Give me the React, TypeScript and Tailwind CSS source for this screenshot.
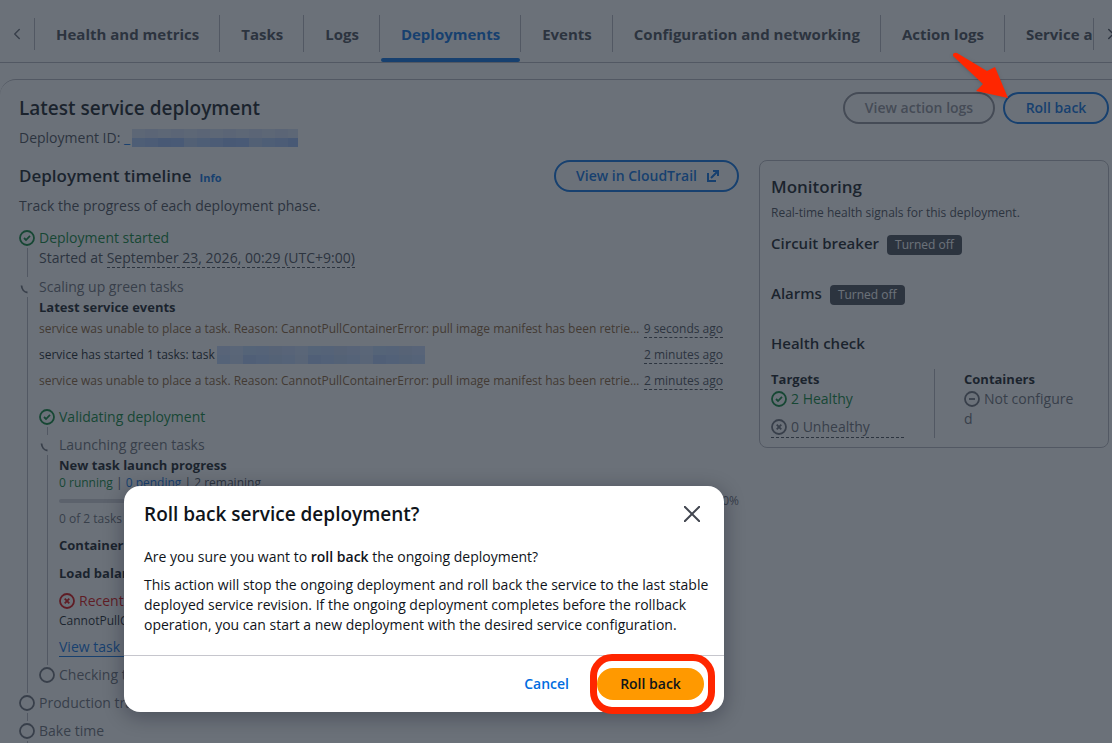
import { ReactNode } from "react";
import { ChevronLeft, ChevronRight } from "lucide-react";

const tabs = [
  "Health and metrics",
  "Tasks",
  "Logs",
  "Deployments",
  "Events",
  "Configuration and networking",
  "Action logs",
  "Service auto scaling",
];

const pullError =
  "service was unable to place a task. Reason: CannotPullContainerError: pull image manifest has been retrie…";

const events = [
  { text: pullError, time: "9 seconds ago", warning: true },
  { text: "service has started 1 tasks: task", time: "2 minutes ago", warning: false },
  { text: pullError, time: "2 minutes ago", warning: true },
];

type IconName = "success" | "error" | "stopped" | "pending" | "loading";

const iconPaths: Record<IconName, string> = {
  success: "m5 8 2 2 4-4.2",
  error: "m5.7 5.7 4.6 4.6M10.3 5.7l-4.6 4.6",
  stopped: "M5 8h6",
  pending: "",
  loading: "M2.5 6.5C2.8 10 5 13.200 8.500 13.500",
};

function StatusIcon({ name }: { name: IconName }) {
  return (
    <svg viewBox="0 0 16 16" className="size-4 shrink-0" fill="none" stroke="currentColor" strokeWidth="1.8">
      {name !== "loading" && <circle cx="8" cy="8" r="7" />}
      <path d={iconPaths[name]} />
    </svg>
  );
}

interface StepProps {
  icon: IconName;
  color: string;
  title: string;
  last?: boolean;
  children?: ReactNode;
}

function Step({ icon, color, title, last, children }: StepProps) {
  return (
    <li className="flex gap-1">
      <div className="flex w-4 shrink-0 flex-col items-center">
        <span className={`flex h-5 items-center ${color}`}>
          <StatusIcon name={icon} />
        </span>
        {!last && <span className="w-px flex-1 bg-[#b4b4bb]" />}
      </div>
      <div className={`min-w-0 flex-1 ${last ? "" : "pb-2"}`}>
        <p className={color}>{title}</p>
        {children}
      </div>
    </li>
  );
}

// blocked-out ids, drawn as two rows of tiles
function Redacted({ width, top, bottom }: { width: number; top: string[]; bottom: string[] }) {
  const cols = Math.ceil(width / 13);
  return (
    <svg width={width} height="18" className="ml-[2px] shrink-0" aria-hidden="true">
      {Array.from({ length: cols }, (_, i) => (
        <g key={i}>
          <rect x={i * 13} y="0" width="13" height="10" fill={top[(i * 2) % top.length]} />
          <rect x={i * 13} y="9" width="13" height="9" fill={bottom[(i * 2) % bottom.length]} />
        </g>
      ))}
    </svg>
  );
}

function Badge({ children }: { children: ReactNode }) {
  return (
    <span className="mt-[2px] rounded bg-[#424650] px-2 text-xs leading-5 text-white">{children}</span>
  );
}

function Monitoring() {
  return (
    <section className="w-[350px] shrink-0 self-start rounded-lg border border-[#b4b4bb] px-[11px] pt-3 pb-[9px]">
      <h2 className="text-[17px] leading-7 font-semibold">Monitoring</h2>
      <p className="text-xs leading-6 text-[#424650]">Real-time health signals for this deployment.</p>
      <div className="mt-2 flex items-start gap-2">
        <h3 className="text-[15px] leading-5 font-semibold">Circuit breaker</h3>
        <Badge>Turned off</Badge>
      </div>
      <div className="mt-7 flex items-start gap-2">
        <h3 className="text-[15px] leading-5 font-semibold">Alarms</h3>
        <Badge>Turned off</Badge>
      </div>
      <h3 className="mt-7 text-[15px] leading-5 font-semibold">Health check</h3>
      <div className="mt-4 flex">
        <div className="mr-[30px] w-[133px]">
          <h4 className="text-[13px] leading-5 font-bold">Targets</h4>
          <p className="flex items-center gap-1 text-[#00802f]">
            <StatusIcon name="success" />2 Healthy
          </p>
          <p className="mt-2 flex items-center gap-1 border-b border-dashed border-[#424650] text-[#656871]">
            <StatusIcon name="error" />0 Unhealthy
          </p>
        </div>
        <div className="flex-1 border-l border-[#b4b4bb] pl-[29px]">
          <h4 className="text-[13px] leading-5 font-bold">Containers</h4>
          <p className="w-[114px] break-all text-[#656871]">
            <span className="mr-1 inline-block align-[-3px]">
              <StatusIcon name="stopped" />
            </span>
            Not configured
          </p>
        </div>
      </div>
    </section>
  );
}

function Timeline() {
  return (
    <ol className="mt-3">
      <Step icon="success" color="text-[#00802f]" title="Deployment started">
        <p className="pb-[1px] text-[#424650]">
          Started at{" "}
          <span className="border-b border-dashed border-[#424650]">September 23, 2026, 00:29 (UTC+9:00)</span>
        </p>
      </Step>
      <Step icon="loading" color="text-[#656871]" title="Scaling up green tasks">
        <h4 className="text-[13px] leading-5 font-bold">Latest service events</h4>
        <ul className="mb-4 flex flex-col gap-[6px] pt-[2px] pr-4 text-xs">
          {events.map((e, i) => (
            <li key={i} className="flex justify-between leading-5 whitespace-nowrap">
              {e.warning ? (
                <span className="text-[#85592b]">{e.text}</span>
              ) : (
                <span className="flex items-center">
                  {e.text}
                  <Redacted
                    width={208}
                    top={["#c5d8fa", "#bbd3fa", "#cbdcfa", "#c2d4f4", "#bdd6fa"]}
                    bottom={["#bdd4fa", "#b2cdfa", "#c8daf8", "#b9d0f6", "#adc9f8"]}
                  />
                </span>
              )}
              <span className="h-[19px] shrink-0 border-b border-dashed border-[#424650] text-[#424650]">{e.time}</span>
            </li>
          ))}
        </ul>
        <ol>
          <Step icon="success" color="text-[#00802f]" title="Validating deployment" />
          <Step icon="loading" color="text-[#656871]" title="Launching green tasks">
            <h4 className="text-[13px] leading-5 font-bold">New task launch progress</h4>
            <p className="text-xs leading-4 text-[#424650]">
              <span className="text-[#00802f]">0 running</span> | <span className="text-[#006ce0]">0 pending</span> | 2
              remaining
            </p>
            <div className="flex items-center gap-2 text-xs leading-5 text-[#656871]">
              <div className="h-1 flex-1 rounded-full bg-[#d0d0d8]" />
              0%
            </div>
            <p className="text-xs leading-4 text-[#656871]">0 of 2 tasks</p>
            <h4 className="mt-2 text-[13px] leading-5 font-bold">Container health</h4>
            <h4 className="mt-2 text-[13px] leading-5 font-bold">Load balancer health</h4>
            <p className="mt-2 flex items-center gap-1 text-[#db0000]">
              <StatusIcon name="error" />
              Recent task failure
            </p>
            <p className="text-xs leading-5">CannotPullContainerError</p>
            <a href="#" className="mt-[6px] inline-block border-b border-[#006ce0] leading-[19px] text-[#006ce0]">
              View task details
            </a>
          </Step>
          <Step icon="pending" color="text-[#656871]" title="Checking task health" last />
        </ol>
      </Step>
      <Step icon="pending" color="text-[#656871]" title="Production traffic" />
      <Step icon="pending" color="text-[#656871]" title="Bake time" />
    </ol>
  );
}

function RollBackDialog() {
  return (
    <div
      role="dialog"
      aria-labelledby="dialog-title"
      className="absolute top-[486px] left-[124px] w-[600px] rounded-2xl bg-white shadow-[0_4px_20px_1px_rgba(0,7,22,0.3)]"
    >
      <div className="flex items-center justify-between px-5 pt-3">
        <h2 id="dialog-title" className="text-[19px] leading-8 font-semibold">
          Roll back service deployment?
        </h2>
        <button type="button" aria-label="Close" className="mr-1 text-[#424650]">
          <svg viewBox="0 0 16 16" className="size-4" fill="none" stroke="currentColor" strokeWidth="2">
            <path d="m0 0 16 16M16 0 0 16" />
          </svg>
        </button>
      </div>
      <div className="flex flex-col gap-2 pt-[17px] pr-3 pb-5 pl-5">
        <p>
          Are you sure you want to <b className="font-semibold">roll back</b> the ongoing deployment?
        </p>
        <p>
          This action will stop the ongoing deployment and roll back the service to the last stable deployed service
          revision. If the ongoing deployment completes before the rollback operation, you can start a new deployment
          with the desired service configuration.
        </p>
      </div>
      <div className="flex items-center justify-end border-t border-[#c6c6cd] px-5 py-3 font-semibold">
        <button type="button" className="px-5 py-[6px] text-[#006ce0]">
          Cancel
        </button>
        <div className="relative ml-2">
          <button type="button" className="w-[107px] rounded-full bg-[#ff9900] py-[6px] text-[#0f141a]">
            Roll back
          </button>
          <span className="pointer-events-none absolute -inset-y-[14px] -right-[11px] -left-[7px] rounded-[22px] border-[7px] border-[#ff2600]" />
        </div>
      </div>
    </div>
  );
}

export default function App() {
  return (
    <div className="relative h-screen overflow-hidden bg-white font-['Open_Sans',sans-serif] text-sm text-[#0f141a]">
      <nav className="flex h-[63px] items-center border-b border-[#b4b4bb] pt-[5px]">
        <button type="button" aria-label="Previous tabs" className="h-8 w-[35px] border-r border-[#b4b4bb] pl-2 text-[#656871]">
          <ChevronLeft size={18} />
        </button>
        <div className="flex h-full min-w-0 flex-1 overflow-hidden text-[15px] font-bold whitespace-nowrap text-[#424650]">
          {tabs.map((tab) => (
            <a
              key={tab}
              href="#"
              className={`flex flex-col justify-between ${tab === "Deployments" ? "text-[#006ce0]" : ""}`}
            >
              <span className="mt-[10px] flex h-[37px] items-center border-r border-[#b4b4bb] pt-[2px] pr-5 pl-[21px]">
                {tab}
              </span>
              {tab === "Deployments" && <span className="mx-px h-1 rounded-full bg-[#006ce0]" />}
            </a>
          ))}
        </div>
        <button
          type="button"
          aria-label="Next tabs"
          className="h-8 w-[19px] shrink-0 overflow-hidden border-l border-[#b4b4bb] pl-2 text-[#424650]"
        >
          <ChevronRight size={18} />
        </button>
      </nav>

      <main className="mt-4 rounded-tl-2xl border-t border-[#b4b4bb] pt-3 pr-[3px] pl-[19px]">
        <header className="flex justify-between">
          <div>
            <h1 className="text-[19px] leading-8 font-semibold">Latest service deployment</h1>
            <p className="flex h-7 items-center text-[#424650]">
              Deployment ID:&nbsp;<span className="text-[#006ce0]">_</span>
              <Redacted
                width={166}
                top={["#d3dff5", "#dbe4f5", "#cddbf5", "#d8dfee"]}
                bottom={["#a8c4f5", "#98b9f5", "#a0bff5", "#b4caf2", "#94b6f2"]}
              />
            </p>
          </div>
          <div className="flex items-start gap-2 font-semibold">
            <button type="button" disabled className="h-8 w-[152px] rounded-full border-2 border-[#8c8c94] text-[#8c8c94]">
              View action logs
            </button>
            <button type="button" className="h-8 w-[106px] rounded-full border-2 border-[#006ce0] text-[#006ce0]">
              Roll back
            </button>
          </div>
        </header>

        <div className="mt-2 flex gap-5">
          <section className="min-w-0 flex-1">
            <div className="flex items-center justify-between">
              <div className="flex h-8 items-baseline gap-2">
                <h2 className="text-[17px] leading-8 font-semibold">Deployment timeline</h2>
                <a href="#" className="text-[11px] font-bold text-[#006ce0]">
                  Info
                </a>
              </div>
              <a
                href="#"
                className="flex h-8 items-center gap-2 rounded-full border-2 border-[#006ce0] pr-4 pl-5 font-semibold text-[#006ce0]"
              >
                View in CloudTrail
                <svg viewBox="0 0 16 16" className="size-4" fill="none" stroke="currentColor" strokeWidth="2">
                  <path d="M3 5v8h8M8 3h5v5M13 3l-7 7" />
                </svg>
              </a>
            </div>
            <p className="mt-1 text-[#424650]">Track the progress of each deployment phase.</p>
            <Timeline />
          </section>
          <Monitoring />
        </div>
      </main>

      <div className="absolute inset-0 bg-[#232b37]/67" />
      <RollBackDialog />

      <svg viewBox="0 0 80 62" className="absolute top-[45px] right-[87px] h-[62px] w-20 drop-shadow" fill="#ff2600">
        <path d="M8 9q2-2 4-1l30 18 8-4 13 31-32-7 7-7L8 11Z" />
      </svg>
    </div>
  );
}
